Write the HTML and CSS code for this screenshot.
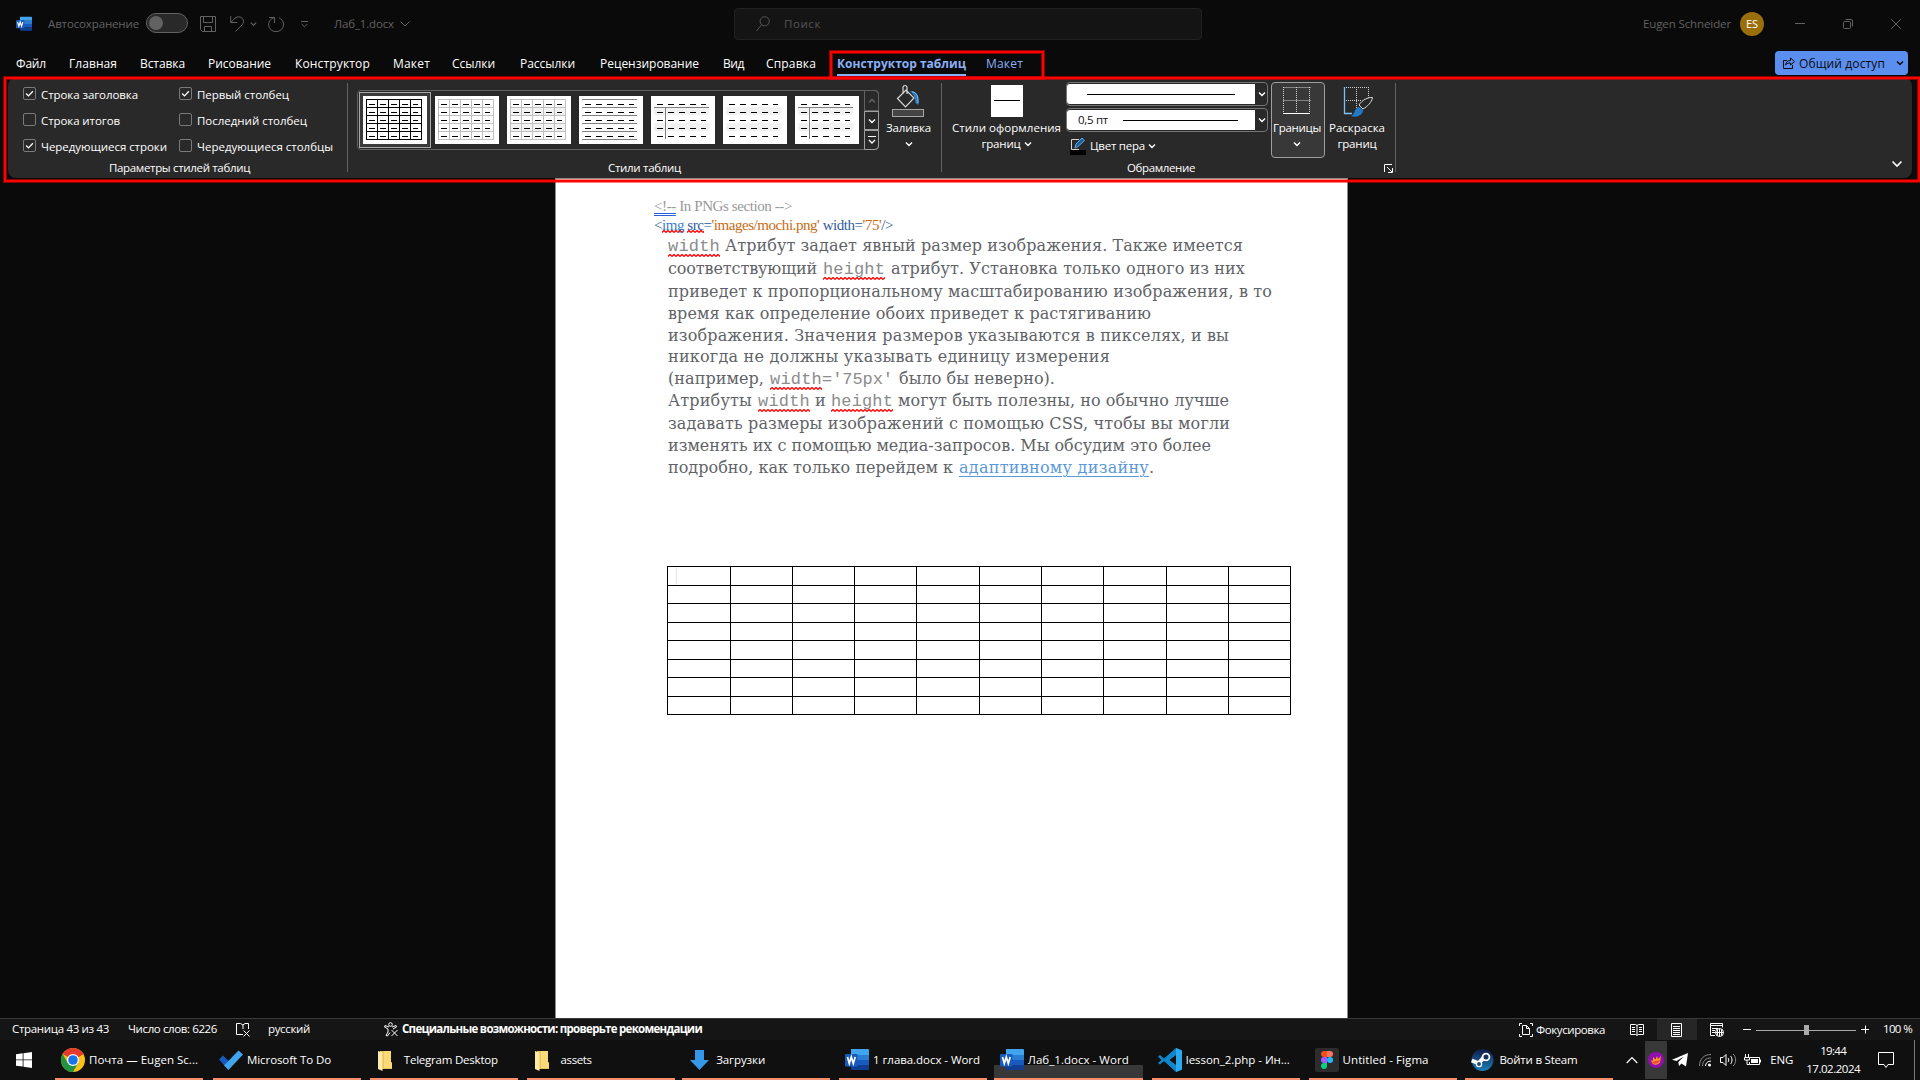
FILE: index.html
```html
<!DOCTYPE html>
<html lang="ru">
<head>
<meta charset="utf-8">
<title>Лаб_1.docx - Word</title>
<link rel="stylesheet" href="styles.css">
</head>
<body>
<svg class="defs" width="0" height="0">
  <defs>
    <symbol id="word" viewBox="0 0 24 24"><path fill="#41a5ee" d="M6 1h17a1 1 0 0 1 1 1v5H6z"/><path fill="#2b7cd3" d="M6 7h18v5H6z"/><path fill="#185abd" d="M6 12h18v5H6z"/><path fill="#103f91" d="M6 17h18v4a1 1 0 0 1-1 1H7a1 1 0 0 1-1-1z"/><rect y="6" width="12.500" height="12.500" rx="1" fill="#185abd"/><path d="M2.500 9l1.800 6.500L6.300 9l2 6.500L10.200 9" fill="none" stroke="#fff" stroke-width="1.700"/></symbol>
    <symbol id="down" viewBox="0 0 8 8"><path d="M1 2.500l3 3 3-3" fill="none" stroke="currentColor" stroke-width="1.400"/></symbol>
    <symbol id="check" viewBox="0 0 13 13"><path d="M2.500 6.500l2.800 2.800L10.500 3.800" fill="none" stroke="#fff" stroke-width="1.500"/></symbol>
    <symbol id="dashes" viewBox="0 0 64 48"><path d="M6 8.500h49M6 16.500h49M6 24.500h49M6 32.500h49M6 40.500h49" stroke="#000" stroke-dasharray="6 5"/></symbol>
    <symbol id="grid" viewBox="0 0 64 48"><path d="M3 3.500h56M3 11.500h56M3 19.500h56M3 27.500h56M3 35.500h56M3 43.500h56M3.500 3v41M14.500 3v41M25.500 3v41M36.500 3v41M47.500 3v41M58.500 3v41" stroke="currentColor" fill="none"/></symbol>
    <symbol id="bands" viewBox="0 0 64 48"><path d="M3 11h55v8H3zM3 27h55v8H3z" fill="#f2f2f2"/></symbol>
    <symbol id="axis" viewBox="0 0 64 48"><path d="M3 11.500h55M14.500 11v32" stroke="#7f7f7f" fill="none"/></symbol>
    <symbol id="folder" viewBox="0 0 24 24"><path fill="#e9c35c" d="M7 3h11v11l1 1v6H7z"/><path fill="#f9d978" d="M11 3h7v11l1 1v5h-8z"/><path fill="#ffe9a6" d="M5 3l4.500 1.500V23L5 21z"/></symbol>
  </defs>
</svg>
<div class="window">
  <header class="title dim">
    <svg class="m16" width="16" height="16"><use href="#word"/></svg>
    <span class="t m16" data-w="91">Автосохранение</span>
    <span class="toggle m7"></span>
    <svg class="m12" width="16" height="16" fill="none" stroke="currentColor"><path d="M.5.5h15v15H2.500l-2-2zM3.500.5v6h9v-6M4.500 15.500v-5h7v5"/></svg>
    <svg class="m14" width="14" height="16" fill="none" stroke="currentColor"><path d="M.7 0v6.500h6.500M.7 6.500L5 2.200C10-2 16.500 4 12 9L5.500 15.500"/></svg>
    <svg class="m6" width="7" height="8"><use href="#down"/></svg>
    <svg class="m11" width="16" height="17" fill="none" stroke="currentColor"><path d="M1 1.500h5.500V7M6 1.500C-.5 4-1 11.500 4 14.500S16 14 15.500 8C15.300 5 13.500 3 11 1.800"/></svg>
    <svg class="m17" width="7" height="8" fill="none" stroke="currentColor"><path d="M0 1.500h7M.7 4l2.800 2.800L6.300 4"/></svg>
    <span class="t m26" data-w="60">Лаб_1.docx</span>
    <svg class="m6" width="10" height="8" fill="none" stroke="currentColor"><path d="M.5 1.500L5 6l4.500-4.500"/></svg>
    <div class="search m324">
      <svg class="m21" width="14" height="16" fill="none" stroke="currentColor"><circle cx="8.700" cy="5.300" r="4.600"/><path d="M5.500 8.800L.5 15"/></svg>
      <span class="t m14" data-w="37">Поиск</span>
    </div>
    <span class="t m441" data-w="88">Eugen Schneider</span>
    <span class="avatar m9"><span class="t" data-w="12">ES</span></span>
    <svg class="m31" width="10" height="10" stroke="currentColor"><path d="M0 4.500h10"/></svg>
    <svg class="m38" width="10" height="10" fill="none" stroke="currentColor"><rect x=".5" y="2.500" width="7" height="7" rx="1"/><path d="M2.500.5H8a1.500 1.500 0 0 1 1.500 1.500v5.500"/></svg>
    <svg class="m38" width="10" height="10" stroke="currentColor"><path d="M0 0l10 10M10 0L0 10"/></svg>
  </header>

  <nav class="tabs">
    <span class="t m16" data-w="30">Файл</span>
    <span class="t m23" data-w="48">Главная</span>
    <span class="t m23" data-w="45">Вставка</span>
    <span class="t m23" data-w="63">Рисование</span>
    <span class="t m24" data-w="75">Конструктор</span>
    <span class="t m23" data-w="37">Макет</span>
    <span class="t m22" data-w="43">Ссылки</span>
    <span class="t m25" data-w="55">Рассылки</span>
    <span class="t m25" data-w="99">Рецензирование</span>
    <span class="t m24" data-w="21">Вид</span>
    <span class="t m22" data-w="50">Справка</span>
    <span class="t m21 current" data-w="129">Конструктор таблиц</span>
    <span class="t m20 context" data-w="37">Макет</span>
    <div class="share">
      <svg class="m8" width="12" height="13" fill="none" stroke="currentColor"><path d="M4 3.500H.5v8h9V8M2.500 8C3 5 5 3.500 7.500 3.500V1L11.500 4.700 7.500 8V6C5.500 5.800 4 6.500 2.500 8z"/></svg>
      <span class="t m4" data-w="86">Общий доступ</span>
      <svg class="m11" width="8" height="8"><use href="#down"/></svg>
    </div>
  </nav>

  <section class="ribbon">
    <div class="group options">
      <div class="checks">
        <div class="opt"><i class="box"><svg width="11" height="11"><use href="#check"/></svg></i><span class="t" data-w="97">Строка заголовка</span></div>
        <div class="opt"><i class="box"><svg width="11" height="11"><use href="#check"/></svg></i><span class="t" data-w="92">Первый столбец</span></div>
        <div class="opt"><i class="box"></i><span class="t" data-w="79">Строка итогов</span></div>
        <div class="opt"><i class="box"></i><span class="t" data-w="110">Последний столбец</span></div>
        <div class="opt"><i class="box"><svg width="11" height="11"><use href="#check"/></svg></i><span class="t" data-w="126">Чередующиеся строки</span></div>
        <div class="opt"><i class="box"></i><span class="t" data-w="136">Чередующиеся столбцы</span></div>
      </div>
      <div class="caption"><span class="t m101" data-w="141">Параметры стилей таблиц</span></div>
    </div>
    <div class="group styles">
      <div class="gallery">
        <div class="cell chosen"><svg width="64" height="48" color="#000"><use href="#grid"/><use href="#dashes"/></svg></div>
        <div class="cell"><svg width="64" height="48" color="#bfbfbf"><use href="#grid"/><use href="#dashes"/></svg></div>
        <div class="cell"><svg width="64" height="48" color="#bfbfbf"><use href="#bands"/><use href="#grid"/><use href="#dashes"/></svg></div>
        <div class="cell"><svg width="64" height="48"><path d="M3 3.500h55M3 11.500h55M3 19.500h55M3 27.500h55M3 35.500h55M3 43.500h55" stroke="#7f7f7f"/><use href="#dashes"/></svg></div>
        <div class="cell"><svg width="64" height="48"><use href="#bands"/><use href="#axis"/><use href="#dashes"/></svg></div>
        <div class="cell"><svg width="64" height="48"><use href="#bands"/><use href="#dashes"/></svg></div>
        <div class="cell"><svg width="64" height="48"><use href="#bands"/><use href="#axis"/><use href="#dashes"/></svg></div>
        <div class="scroller">
          <span class="off"><svg class="flip" width="8" height="8"><use href="#down"/></svg></span>
          <span><svg width="8" height="8"><use href="#down"/></svg></span>
          <span><svg width="8" height="9" fill="none" stroke="#fff"><path d="M0 .5h8"/><path d="M1 4l3 3 3-3" stroke-width="1.400"/></svg></span>
        </div>
      </div>
      <div class="tool m7">
        <svg width="33" height="32" fill="none"><path d="M5.500 13.500L14 5l8 8-8.500 9zM11 9V2.500a2 2 0 0 1 4 0V9" stroke="#d8d8d8" stroke-width="1.200"/><path d="M18 6c5-.5 9 3 8.500 14l-3-2c-.5-5-1-8-5.500-12z" fill="#2f7fc6"/><path d="M20 7c4 0 6.500 3 6 11" stroke="#7cc0f4"/><rect x=".5" y="24.500" width="31" height="7" fill="#444" stroke="#a6a6a6"/></svg>
        <span class="t" data-w="45">Заливка</span>
        <span class="t arrow"><svg width="8" height="8"><use href="#down"/></svg></span>
      </div>
      <div class="caption"><span class="t m260" data-w="73">Стили таблиц</span></div>
    </div>
    <div class="group framing">
      <div class="tool m10">
        <svg width="32" height="32"><path fill="#fff" d="M0 0h32v32H0z"/><path d="M3 15.500h26" stroke="#000"/></svg>
        <span class="t" data-w="109">Стили оформления</span>
        <span class="t pair"><span class="t" data-w="39">границ</span><svg width="8" height="8"><use href="#down"/></svg></span>
      </div>
      <div class="pens m5">
        <div class="combo"><div class="field"><svg class="m20" width="148" height="1"><path d="M0 0h148v1H0z"/></svg></div><svg class="m3" width="8" height="8"><use href="#down"/></svg></div>
        <div class="combo"><div class="field"><span class="t m11" data-w="30">0,5 пт</span><svg class="m15" width="115" height="1"><path d="M0 0h115v1H0z"/></svg></div><svg class="m3" width="8" height="8"><use href="#down"/></svg></div>
        <div class="pen"><svg width="16" height="17" fill="none"><path d="M9 1.500H1.500v10H9" stroke="#d8d8d8"/><path d="M5 10l1-4 6-6 2.500 2.500-6.500 6z" stroke="#5aaef0" fill="#1c5f96"/><path d="M0 12h16v5H0z" fill="#000"/></svg><span class="t m4" data-w="55">Цвет пера</span><svg class="m3" width="8" height="8"><use href="#down"/></svg></div>
      </div>
      <div class="tool pressed m3">
        <svg width="28" height="32" fill="none" stroke="#d0d0d0"><path d="M.5 2v26M13.500 2v26M26.500 2v26M.5 2.500h27M.5 15.500h27" stroke-dasharray="1 1"/><path d="M0 28.500h27" stroke="#fff"/></svg>
        <span class="t" data-w="48">Границы</span>
        <span class="t arrow"><svg width="8" height="8"><use href="#down"/></svg></span>
      </div>
      <div class="tool m4">
        <svg width="30" height="32" fill="none"><path d="M2 2.500h26M14.500 2v26M26.500 2v12M2 15.500h18" stroke="#d0d0d0" stroke-dasharray="1 1"/><path d="M2.500 2v26.500H10" stroke="#7cc0f4" stroke-width="1.300"/><path d="M17 20C20 15 26 12 30.500 12.500 30 17 25 22 21 24z" stroke="#d8d8d8" fill="#292929"/><path d="M9 31c4-1 3-8 8-9l4 3c0 5-6 8-12 6z" fill="#2279c4"/></svg>
        <span class="t" data-w="56">Раскраска</span>
        <span class="t" data-w="39">границ</span>
      </div>
      <div class="caption"><span class="t m185" data-w="68">Обрамление</span><svg class="m189" width="9" height="9" fill="none" stroke="#fff"><path d="M.5 8V.5H8M3 3l5 5M8.500 4v4.500H4"/></svg></div>
    </div>
    <svg class="fold" width="12" height="8" fill="none" stroke="#fff" stroke-width="1.600"><path d="M1.500 1.500L6 6l4.500-4.500"/></svg>
  </section>

  <main class="canvas">
    <article class="page">
      <div class="code grey"><span data-w="138"><u class="grammar">&lt;!--</u> In PNGs section --&gt;</span></div>
      <div class="code blue"><span data-w="239">&lt;<b class="err light">img</b> <b class="err">src</b>=<em>'images/mochi.png'</em> width=<em>'75'</em>/&gt;</span></div>
      <div class="body">
        <p class="tall"><code class="err" data-w="52">width</code><span class="m5" data-w="518">Атрибут задает явный размер изображения. Также имеется</span></p>
        <p class="tall"><span data-w="149">соответствующий</span><code class="err m6" data-w="62">height</code><span class="m6" data-w="354">атрибут. Установка только одного из них</span></p>
        <p class="tall"><span data-w="604">приведет к пропорциональному масштабированию изображения, в то</span></p>
        <p><span data-w="483">время как определение обоих приведет к растягиванию</span></p>
        <p><span data-w="561">изображения. Значения размеров указываются в пикселях, и вы</span></p>
        <p><span data-w="442">никогда не должны указывать единицу измерения</span></p>
        <p><span data-w="96">(например,</span><code class="err m6" data-w="52">width</code><code data-w="71">='75px'</code><span class="m6" data-w="156">было бы неверно).</span></p>
        <p class="tall"><span data-w="84">Атрибуты</span><code class="err m6" data-w="52">width</code><span class="m5" data-w="10">и</span><code class="err m6" data-w="62">height</code><span class="m5" data-w="331">могут быть полезны, но обычно лучше</span></p>
        <p class="tall"><span data-w="562">задавать размеры изображений с помощью CSS, чтобы вы могли</span></p>
        <p><span data-w="543">изменять их с помощью медиа-запросов. Мы обсудим это более</span></p>
        <p><span data-w="285">подробно, как только перейдем к</span><a class="m6" data-w="190">адаптивному дизайну</a><span>.</span></p>
      </div>
      <div class="table" id="table"></div>
    </article>
  </main>

  <footer class="status">
    <span class="t m12" data-w="97">Страница 43 из 43</span>
    <span class="t m19" data-w="89">Число слов: 6226</span>
    <svg class="m19" width="14" height="14" fill="none" stroke="#fff"><path d="M7 11.500H.5v-11h4L7 2l2-1.500h3.500V6M7 2v4M7.500 7.500l6 6M13.500 7.500l-6 6"/></svg>
    <span class="t m18" data-w="42">русский</span>
    <svg class="m74" width="15" height="15" fill="none" stroke="#fff"><circle cx="6.500" cy="2.500" r="1.800"/><path d="M5 5L1 3.500.5 5 4 7v3l-2 3.500 1.500.5L6 10.500M8 5l4-1.500.5 1.500L9 7M7.500 8l6 6M13.500 8l-6 6"/></svg>
    <span class="t m3 bold" data-w="300">Специальные возможности: проверьте рекомендации</span>
    <svg class="focus" width="14" height="14" fill="none" stroke="#fff"><path d="M3 .5H.5V3M11 .5h2.500V3M.5 11v2.500H3M13.500 11v2.500H11M3.500 2.500h4l3 3v6h-7zM7.500 2.500v3h3"/></svg>
    <span class="t m3 low" data-w="69">Фокусировка</span>
    <svg class="m25" width="14" height="13" fill="none" stroke="#fff"><path d="M.5 1.500h5L7 2.500l1.500-1h5v10h-5L7 12.500l-1.500-1h-5zM7 2v10M2 4.500h3M2 6.500h3M2 8.500h3M9 4.500h3M9 6.500h3M9 8.500h3"/></svg>
    <span class="view m13"><svg width="12" height="14" fill="none" stroke="#fff"><path d="M.5.5h10v13H.5zM2 3.500h7M2 5.500h7M2 7.500h7M2 9.500h7M2 11.500h7"/></svg></span>
    <svg class="m13" width="15" height="14" fill="none" stroke="#fff"><path d="M5 12.500H.5V.5h12v4M.5 2.500h12M2 5.500h6M2 7.500h3M2 9.500h3"/><circle cx="9.500" cy="9.500" r="4"/><path d="M5.500 9.500h8M9.500 5.500v8M7.500 6.500v6M11.500 6.500v6"/></svg>
    <svg class="m18" width="9" height="9" stroke="#fff"><path d="M0 4.500h8"/></svg>
    <span class="zoom m4"></span>
    <svg class="m5" width="9" height="9" stroke="#fff"><path d="M0 4.500h8M4.500.5v8"/></svg>
    <span class="t m13" data-w="29">100 %</span>
  </footer>

  <footer class="taskbar">
    <svg class="m16" width="16" height="16" fill="#fff"><path d="M0 2.300l6.700-1v6.200H0zM7.500 1.200L16 0v7.500H7.500zM0 8.300h6.700v6.300L0 13.700zM7.500 8.300H16V16l-8.500-1.200z"/></svg>
    <div class="task first m23"><svg width="24" height="24"><circle cx="12" cy="12" r="12" fill="#fbc116"/><path d="M12 12L1.600 6A12 12 0 0 1 22.400 6z" fill="#e33b2e"/><path d="M12 6h10.400L12 12z" fill="#e33b2e"/><path d="M1.600 6A12 12 0 0 0 12 24l5.200-9L12 12 6.800 15z" fill="#229342"/><circle cx="12" cy="12" r="6" fill="#fff"/><circle cx="12" cy="12" r="4.800" fill="#1a73e8"/></svg><span class="t" data-w="109">Почта — Eugen Sc...</span></div>
    <div class="task"><svg width="24" height="24"><path d="M0 11.500l4-4 9 9-4 5z" fill="#185abd"/><path d="M5 17.500L19.500 2.500l4.500 4L9.500 22z" fill="#41a5ee"/></svg><span class="t" data-w="84">Microsoft To Do</span></div>
    <div class="task wide"><svg width="24" height="24"><use href="#folder"/></svg><span class="t" data-w="94">Telegram Desktop</span></div>
    <div class="task wide last"><svg width="24" height="24"><use href="#folder"/></svg><span class="t" data-w="31">assets</span></div>
    <div class="task wide arrowed"><svg width="24" height="24"><path d="M8 2h9v10h5l-9.500 10L3 12h5z" fill="#3497e8"/></svg><span class="t" data-w="49">Загрузки</span></div>
    <div class="task"><svg width="24" height="24"><use href="#word"/></svg><span class="t" data-w="107">1 глава.docx - Word</span></div>
    <div class="task active"><svg width="24" height="24"><use href="#word"/></svg><span class="t" data-w="101">Лаб_1.docx - Word</span></div>
    <div class="task"><svg width="24" height="24"><path d="M18 0l6 2.500v19L18 24 6 13l-4 3.500-2-1.500 3.500-3L0 8.500 2 7l4 3.500zM18 7l-6.500 5 6.500 5z" fill="#0f87cf" fill-rule="evenodd"/><path d="M18 0l6 2.500v19L18 24z" fill="#29a9f0"/></svg><span class="t" data-w="104">lesson_2.php - Ин...</span></div>
    <div class="task"><svg width="24" height="24"><rect width="24" height="24" rx="2" fill="#2c2c2c"/><path d="M12 3H9a3 3 0 0 0 0 6h3z" fill="#f24e1e"/><path d="M12 3h3a3 3 0 0 1 0 6h-3z" fill="#ff7262"/><path d="M12 9H9a3 3 0 0 0 0 6h3z" fill="#a259ff"/><circle cx="15" cy="12" r="3" fill="#1abcfe"/><path d="M12 15H9a3 3 0 1 0 3 3z" fill="#0acf83"/></svg><span class="t" data-w="86">Untitled - Figma</span></div>
    <div class="task"><svg width="24" height="24"><defs><linearGradient id="st" x2="0" y2="1"><stop stop-color="#101d4a"/><stop offset="1" stop-color="#1c7fb8"/></linearGradient></defs><circle cx="11.500" cy="12" r="11" fill="url(#st)"/><path d="M.7 12.500l7 2.800 4.800-5.500" fill="none" stroke="#fff" stroke-width="4"/><circle cx="15" cy="9" r="3.400" fill="#1a3260" stroke="#fff" stroke-width="1.800"/><circle cx="8" cy="16" r="2.600" fill="#174b7d" stroke="#fff" stroke-width="1.300"/></svg><span class="t" data-w="78">Войти в Steam</span></div>
    <svg class="m4" width="12" height="8" fill="none" stroke="#fff" stroke-width="1.200"><path d="M.7 7L6 1.500 11.300 7"/></svg>
    <span class="tray m7"><svg width="16" height="16"><circle cx="8" cy="8" r="8" fill="#8f0fb0"/><path d="M3 8l2 1V5l2.500 2.500L9 4l1 3 3-3-1 6c-1 3-6 4-8 1z" fill="#ff9a1f"/><path d="M4 10l8-2c-1 4-6 5-8 2z" fill="#f0453a"/></svg></span>
    <svg class="m5" width="16" height="14" fill="#fff"><path d="M0 6.700L16 0l-2 13.500-4.500-3L7 13l-.7-4L12 3.500 4.500 8z"/></svg>
    <svg class="m11" width="13" height="14" fill="none" stroke="#8a8a8a"><path d="M.5 13C.5 6 5 1.500 12 1.500M3.500 13C3.500 8 7 5 12 5"/><path d="M6.500 13C6.500 10 9 8 12 8" stroke="#fff"/><circle cx="10.500" cy="12" r="1.500" fill="#fff" stroke="none"/></svg>
    <svg class="m8" width="17" height="14" fill="none" stroke="#fff"><path d="M.5 4.500h2.500l3-3v11l-3-3H.5zM8 5c1 1 1 3 0 4M10.500 3c2 2 2 6 0 8"/><path d="M13 1c3.500 3 3.500 9 0 12" stroke="#888"/></svg>
    <svg class="m7" width="17" height="12" fill="none" stroke="#fff"><path d="M6 3.500h9.500v7h-10V8M1.500 0v3M4.500 0v3M.5 3.500h5V6h-5zM3 6v4.500h2.500"/><path d="M7 5h7v4H7zM16 5.500h1v3h-1z" fill="#fff" stroke="none"/></svg>
    <span class="t m9" data-w="23">ENG</span>
    <div class="clock m13"><span class="t" data-w="26">19:44</span><span class="t" data-w="54">17.02.2024</span></div>
    <svg class="m18" width="16" height="17" fill="none" stroke="#fff"><path d="M.5.500h15v12H10L8 15.500l-2-3H.5z"/></svg>
    <i class="peek"></i>
  </footer>
</div>
<div class="mark mark-tabs"></div>
<div class="mark mark-ribbon"></div>
<script src="app.js"></script>
</body>
</html>
```
FILE: styles.css
```css
* { box-sizing: border-box; }
body { margin: 0; background: #0a0a0a; color: #fff; font: 11.5px/16px "Open Sans", "Noto Sans", sans-serif; overflow: hidden; }
.defs { position: absolute; }
.window { width: 1920px; height: 1080px; display: flex; flex-direction: column; }
svg { display: block; flex: none; overflow: visible; }
.t, [data-w] { white-space: nowrap; flex: none; }
.t { display: block; }

.m3 { margin-left: 3px; } .m4 { margin-left: 4px; } .m5 { margin-left: 5px; }
.m6 { margin-left: 6px; } .m7 { margin-left: 7px; } .m8 { margin-left: 8px; } .m9 { margin-left: 9px; }
.m10 { margin-left: 10px; } .m11 { margin-left: 11px; } .m12 { margin-left: 12px; } .m13 { margin-left: 13px; }
.m14 { margin-left: 14px; } .m15 { margin-left: 15px; } .m16 { margin-left: 16px; } .m17 { margin-left: 17px; }
.m18 { margin-left: 18px; } .m19 { margin-left: 19px; } .m20 { margin-left: 20px; } .m21 { margin-left: 21px; }
.m22 { margin-left: 22px; } .m23 { margin-left: 23px; } .m24 { margin-left: 24px; } .m25 { margin-left: 25px; }
.m26 { margin-left: 26px; } .m31 { margin-left: 31px; } .m38 { margin-left: 38px; } .m74 { margin-left: 74px; }
.m101 { margin-left: 101px; } .m185 { margin-left: 185px; } .m189 { margin-left: 189px; }
.m260 { margin-left: 260px; } .m324 { margin-left: 324px; } .m441 { margin-left: 441px; }

.title { height: 48px; display: flex; align-items: center; color: #626262; flex: none; }
.toggle { width: 42px; height: 20px; border: 1px solid #626262; border-radius: 10px; background: #292929; flex: none; margin-top: -2px; }
.toggle::before { content: ""; display: block; width: 14px; height: 14px; margin: 2px; border-radius: 50%; background: #626262; }
.search { width: 468px; height: 32px; border: 1px solid #212121; border-radius: 4px; background: #141414; display: flex; align-items: center; color: #555; flex: none; }
.avatar { width: 24px; height: 24px; border-radius: 50%; background: #986f0b; color: #fff; display: flex; align-items: center; justify-content: center; flex: none; font-size: 11px; }

.tabs { height: 30px; display: flex; align-items: center; flex: none; font-size: 12px; }
.tabs > .t { padding-top: 1px; }
.tabs > .current { color: #8ab0f8; font-weight: 700; height: 24px; line-height: 20px; padding-top: 2px; margin-top: 1px; border-bottom: 2px solid #8ab0f8; }
.context { color: #8ab0f8; }
.share { margin-left: auto; margin-right: 12px; width: 133px; height: 24px; border-radius: 4px; background: #5b8fef; color: #0a0a0a; display: flex; align-items: center; }
.share .t { padding-top: 1px; }

.ribbon { height: 100px; margin: 0 8px; width: 1904px; background: #292929; border-radius: 8px; display: flex; flex: none; }
.group { height: 100px; display: flex; flex-wrap: wrap; align-content: flex-start; position: relative; flex: none; }
.group::after { content: ""; position: absolute; right: 0; top: 5px; width: 1px; height: 89px; background: #626262; }
.options { width: 340px; }
.styles { width: 594px; }
.framing { width: 454px; }
.caption { width: 100%; height: 20px; display: flex; align-items: center; flex: none; }
.checks { width: 100%; height: 80px; padding: 4px 0 0 15px; display: grid; grid-template-columns: 156px 1fr; grid-template-rows: repeat(3, 26px); }
.opt { display: flex; align-items: center; gap: 5px; }
.box { width: 13px; height: 13px; border: 1px solid #7a7a7a; border-radius: 2px; margin-top: -3px; }
.gallery { width: 522px; height: 60px; margin: 12px 0 8px 9px; border: 1px solid #626262; border-radius: 4px; display: flex; align-items: center; flex: none; }
.cell { width: 72px; height: 56px; display: flex; align-items: center; justify-content: center; flex: none; }
.cell:first-child { margin-left: 1px; }
.cell svg { background: #fff; }
.chosen { border: 1px solid #a8a8a8; background: #3a3a3a; }
.scroller { width: 15px; height: 60px; margin: 0 -1px 0 auto; display: grid; grid-template-rows: 21px 19px 20px; }
.scroller span { border: 1px solid #a0a0a0; display: flex; align-items: center; justify-content: center; }
.scroller .off { border-color: #626262; border-top-right-radius: 4px; color: #666; }
.scroller span:last-child { border-bottom-right-radius: 4px; }
.flip { transform: rotate(180deg); }
.tool { height: 80px; padding-top: 7px; display: flex; flex-direction: column; align-items: center; flex: none; }
.tool > svg { margin-bottom: 3px; }
.tool > .t { height: 16px; display: flex; align-items: center; }
.tool > .arrow { height: 15px; }
.pair { gap: 3px; }
.pressed { width: 54px; height: 76px; margin-top: 4px; margin-bottom: 0; padding: 2px 2px 0 0; border: 1px solid #a0a0a0; border-radius: 4px; background: #383838; }
.pens { width: 202px; padding-top: 4px; display: flex; flex-direction: column; height: 80px; flex: none; }
.combo { height: 24px; margin-bottom: 2px; border: 1px solid #757575; border-radius: 4px; display: flex; align-items: center; flex: none; }
.field { width: 188px; height: 20px; background: #fff; border-radius: 3px 0 0 3px; color: #111; display: flex; align-items: center; }
.pen { height: 24px; padding-left: 4px; display: flex; align-items: center; }
.fold { margin: 82px 0 0 auto; margin-right: 9px; }

.canvas { height: 840px; display: flex; flex: none; }
.page { width: 793px; height: 840px; margin-left: 555px; background: #fff; border: 1px solid #8a8a8a; border-bottom: 0; padding-top: 18px; color: #5f6368; }
.code { height: 19px; margin-left: 98px; font: 15px/19px "Liberation Serif", serif; display: flex; }
.grey { color: #999; }
.blue { color: #2f5c9e; }
.light { color: #3b80cc; }
.code b { font-weight: 400; }
.code em { font-style: normal; color: #c96a10; }
.grammar { text-decoration: underline double #2a63d8 1px; text-underline-offset: 2px; }
.err { background: url("data:image/svg+xml,%3Csvg xmlns='http://www.w3.org/2000/svg' width='4' height='3'%3E%3Cpath d='M0 2.500L2 .5 4 2.500' fill='none' stroke='red' stroke-width='1.300'/%3E%3C/svg%3E") repeat-x left bottom; }
.body { height: 244px; margin: -1px 0 0 112px; font: 16px/21.500px "DejaVu Serif", serif; }
.body p { margin: 0; height: 21.500px; display: flex; align-items: baseline; }
.body p.tall { height: 23px; line-height: 23px; }
.body code { font: 17px/21px "Liberation Mono", monospace; color: #8c8c8c; }
.body a { color: #5a98dc; text-decoration: underline 1px; text-underline-offset: 3px; }
.table { width: 624px; margin: 88px 0 0 111px; background: #000; padding: 1px; display: grid; gap: 1px; grid-template-columns: 62px 61px 61px 61px 62px 61px 61px 62px 61px 61px; grid-template-rows: 18px 17px 18px 17px 18px 17px 18px 17px; }
.table i { background: #fff; }
.table i:first-child { background: linear-gradient(90deg, #fff 8px, #e6e6e6 8px, #e6e6e6 9px, #fff 9px); }

.status { height: 22px; border-top: 1px solid #3a3a3a; background: #151515; display: flex; align-items: center; flex: none; }
.status .t { margin-top: -2px; }
.bold { font-weight: 700; }
.focus { margin-left: 817px; }
.low { padding-top: 2px; }
.view { width: 40px; height: 21px; background: #262626; display: flex; align-items: center; justify-content: center; flex: none; }
.zoom { width: 100px; height: 10px; background: linear-gradient(#aaa, #aaa) 48px 0 / 5px 10px no-repeat, linear-gradient(#aaa, #aaa) 0 5px / 100% 1px no-repeat; flex: none; }

.taskbar { height: 40px; background: #101010; display: flex; align-items: center; flex: none; }
.task { width: 148px; height: 40px; margin-right: 8.800px; padding: 2px 0 0 6px; border-bottom: 2px solid #f88f6c; display: flex; align-items: center; gap: 4px; flex: none; }
.first { margin-right: 10px; }
.last { margin-right: 7.600px; }
.wide { gap: 4px; padding-left: 3px; }
.wide .t { margin-left: 3px; }
.arrowed { padding-left: 5px; }
.arrowed .t { margin-left: 1px; }
.active { background: linear-gradient(transparent 25px, #383838 25px); width: 149px; margin-left: -2px; margin-right: 9px; }
.tray { width: 22px; height: 38px; background: #383838; display: flex; align-items: center; justify-content: center; flex: none; }
.clock { height: 36px; display: flex; flex-direction: column; align-items: center; line-height: 18px; flex: none; }
.peek { width: 1px; height: 40px; margin-left: 20px; background: #7a7a7a; }

.mark { position: absolute; border: 2px solid #f00; box-shadow: 0 0 0 1px rgba(255, 0, 0, .5), inset 0 0 0 1px rgba(255, 0, 0, .5); }
.mark-tabs { left: 830px; top: 51px; width: 214px; height: 28px; }
.mark-ribbon { left: 4px; top: 77px; width: 1916px; height: 105px; }
```
FILE: app.js
```js
document.querySelectorAll("[data-w]").forEach(function (el) {
  var target = Number(el.dataset.w);
  var range = document.createRange();
  range.selectNodeContents(el);
  var natural = range.getBoundingClientRect().width;
  el.style.letterSpacing = (target - natural) / el.textContent.length + "px";
  el.style.width = target + "px";
});

// Fill the empty 10 by 8 table.
var table = document.getElementById("table");
for (var i = 0; i < 80; i++) {
  table.appendChild(document.createElement("i"));
}
```
